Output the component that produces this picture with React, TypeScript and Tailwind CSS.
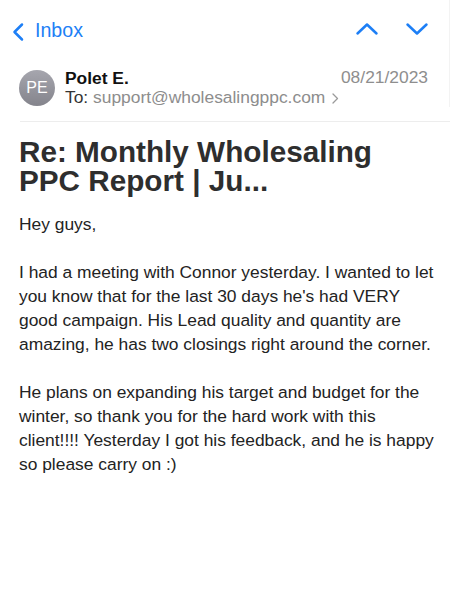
import React from "react";

export default function App() {
  return (
    <div
      className="w-[450px] h-[604px] bg-white overflow-hidden"
      style={{ fontFamily: '"Liberation Sans", Arial, Helvetica, sans-serif' }}
    >
      <div className="border-r border-[#f3f3f3]">
        {/* Top nav */}
        <div className="flex items-start justify-between pt-[18px] pl-[12px] pr-[20.5px]">
          <div className="flex items-start gap-[11px]">
            <svg width="12" height="20" viewBox="0 0 12 20" className="mt-[4px]">
              <path
                d="M10 2.5 L2.5 10 L10 17.5"
                fill="none"
                stroke="#1d7ff6"
                strokeWidth="2.5"
                strokeLinecap="round"
                strokeLinejoin="round"
              />
            </svg>
            <span className="text-[19.6px] leading-[24px] text-[#1d7ff6]">Inbox</span>
          </div>
          <div className="flex items-start gap-[25.5px] pt-[4px]">
            <svg width="24" height="14" viewBox="0 0 24 14">
              <path
                d="M2.5 11.5 L12 2.5 L21.5 11.5"
                fill="none"
                stroke="#1d7ff6"
                strokeWidth="2.5"
                strokeLinecap="round"
                strokeLinejoin="round"
              />
            </svg>
            <svg width="24" height="14" viewBox="0 0 24 14">
              <path
                d="M2.5 2.5 L12 11.5 L21.5 2.5"
                fill="none"
                stroke="#1d7ff6"
                strokeWidth="2.5"
                strokeLinecap="round"
                strokeLinejoin="round"
              />
            </svg>
          </div>
        </div>

        {/* Sender */}
        <div className="flex items-start mt-[26.5px] pl-[19px] pr-[21px]">
          <div className="mt-[1px] w-[36px] h-[36px] rounded-full bg-gradient-to-b from-[#a6a6ae] to-[#84848c] flex items-center justify-center shrink-0">
            <span className="text-white text-[16px] leading-none">PE</span>
          </div>
          <div className="ml-[10px] flex-1 min-w-0">
            <div className="flex items-start justify-between">
              <span className="font-bold text-[17.4px] leading-[19px] text-[#111]">Polet E.</span>
              <span className="text-[17.4px] leading-[19px] text-[#8e8e8e] -mt-px">08/21/2023</span>
            </div>
            <div className="flex items-center text-[17.4px] leading-[19px]">
              <span className="text-[#333]">To:&nbsp;</span>
              <span className="text-[#8d8d8d]">support@wholesalingppc.com</span>
              <svg width="7" height="11" viewBox="0 0 7 11" className="ml-[7px] mt-[2px]">
                <path
                  d="M1 1 L5.5 5.5 L1 10"
                  fill="none"
                  stroke="#9a9a9a"
                  strokeWidth="1.3"
                  strokeLinecap="round"
                  strokeLinejoin="round"
                />
              </svg>
            </div>
          </div>
        </div>
      </div>

      {/* Separator */}
      <div className="mt-[14px] ml-[20px] h-[1.5px] bg-[#ededed]" />

      {/* Title */}
      <div className="pl-[19px] w-[438px]">
        <h1 className="mt-[15px] font-bold text-[29.7px] leading-[29px] text-[#2e2e2e]">
          Re: Monthly Wholesaling PPC Report | Ju...
        </h1>
        <div className="mt-[16.5px] text-[17.4px] leading-[24px] text-[#232323]">
          <p className="mb-[24px]">Hey guys,</p>
          <p className="mb-[24px]">
            I had a meeting with Connor yesterday. I wanted to let you know that for the last 30
            days he's had VERY good campaign. His Lead quality and quantity are amazing, he has two
            closings right around the corner.
          </p>
          <p>
            He plans on expanding his target and budget for the winter, so thank you for the hard
            work with this client!!!! Yesterday I got his feedback, and he is happy so please carry
            on :)
          </p>
        </div>
      </div>
    </div>
  );
}
